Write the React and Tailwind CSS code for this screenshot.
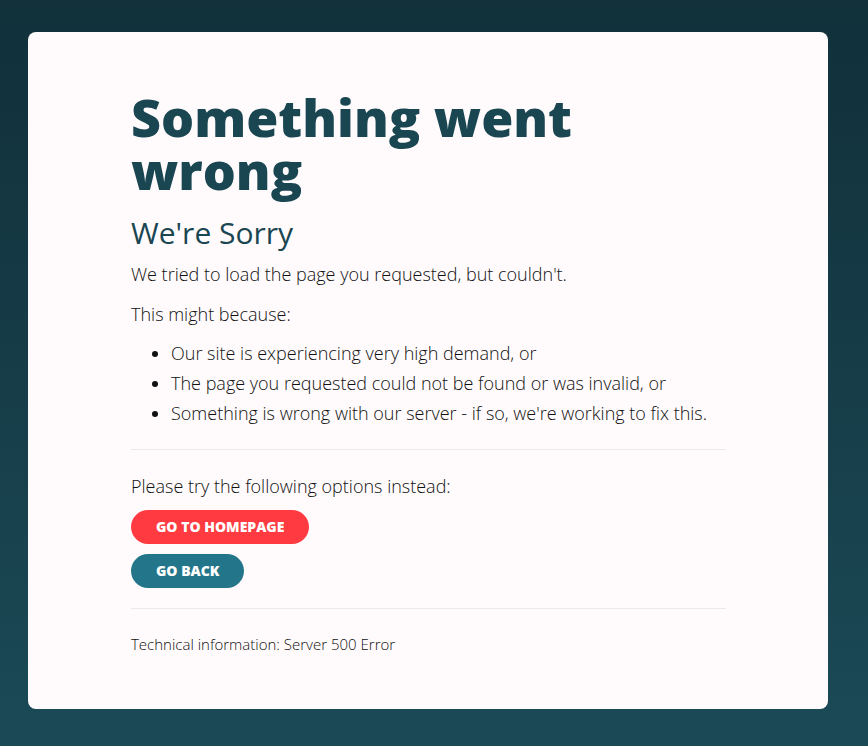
export default function App() {
  const reasons = [
    "Our site is experiencing very high demand, or",
    "The page you requested could not be found or was invalid, or",
    "Something is wrong with our server - if so, we're working to fix this.",
  ];

  return (
    <div
      className="min-h-screen w-full bg-gradient-to-b from-[#11303a] to-[#1b4a57] px-[28px] pt-[32px] pb-[37px]"
      style={{ fontFamily: '"Open Sans", "Noto Sans", sans-serif' }}
    >
      <div className="w-[800px] rounded-[8px] bg-[#fffbfc] pl-[103px] pr-[102px] pt-[58px] pb-[54px]">
        <h1 className="text-[52px] leading-[53px] font-extrabold text-[#1a4652]">
          Something went wrong
        </h1>
        <h2 className="mt-[19px] text-[30px] leading-[36px] font-normal text-[#1a4652]">
          We&apos;re Sorry
        </h2>

        <div className="text-[18px] leading-[30px] font-light text-[#111111]">
          <p className="mt-[8px]">
            We tried to load the page you requested, but couldn&apos;t.
          </p>
          <p className="mt-[10px]">This might because:</p>
          <ul className="mt-[9px] list-disc pl-[40px]">
            {reasons.map((r) => (
              <li key={r}>{r}</li>
            ))}
          </ul>

          <hr className="mt-[21px] mb-[21px] border-0 border-t border-[#ebe8e9]" />

          <p>Please try the following options instead:</p>
          <div className="mt-[9px] flex flex-col items-start gap-[10px]">
            <button className="h-[34px] rounded-full bg-[#ff3b41] px-[25px] text-[14px] leading-[34px] font-extrabold uppercase text-white">
              Go to homepage
            </button>
            <button className="h-[34px] rounded-full bg-[#23768a] px-[25px] text-[14px] leading-[34px] font-extrabold uppercase text-white">
              Go back
            </button>
          </div>

          <hr className="mt-[20px] mb-[24px] border-0 border-t border-[#ebe8e9]" />

          <p className="text-[15px] leading-[22px]">
            Technical information: Server 500 Error
          </p>
        </div>
      </div>
    </div>
  );
}
